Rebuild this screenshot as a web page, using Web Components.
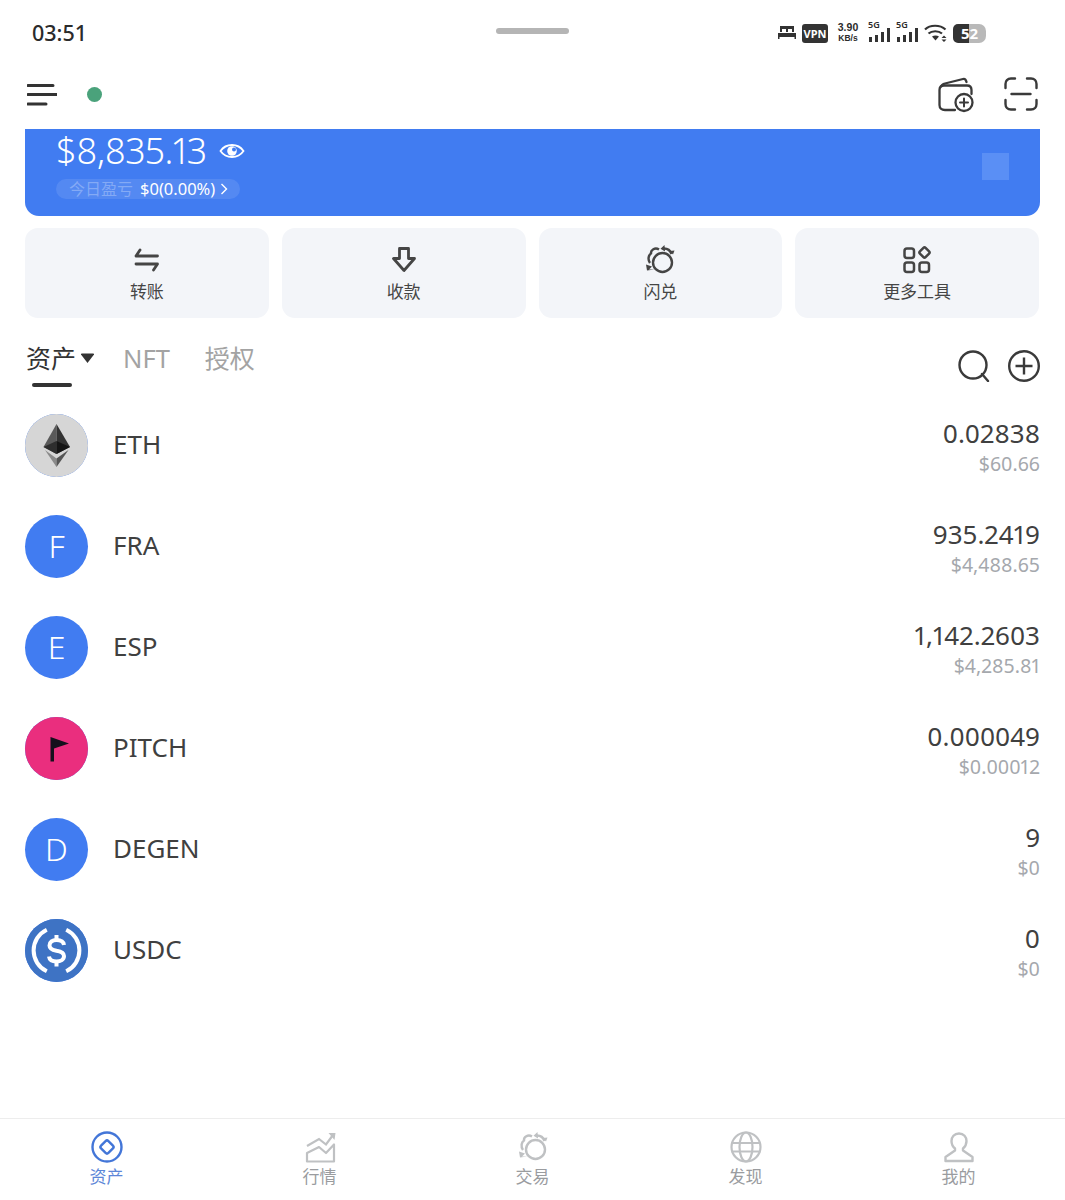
<!DOCTYPE html>
<html lang="zh">
<head>
<meta charset="utf-8">
<title>资产</title>
<style>
html, body { margin: 0; padding: 0; background: #fff; }
body { width: 1065px; height: 1200px; overflow: hidden; color: #333; font-family: "Noto Sans", "Noto Sans CJK SC", sans-serif; }
wallet-app { height: 1200px; }
</style>
</head>
<body>
<wallet-app>
  <status-bar></status-bar>
  <top-bar></top-bar>
  <balance-card></balance-card>
  <action-grid>
    <action-button icon="transfer">转账</action-button>
    <action-button icon="receive">收款</action-button>
    <action-button icon="swap">闪兑</action-button>
    <action-button icon="more">更多工具</action-button>
  </action-grid>
  <asset-tabs></asset-tabs>
  <asset-list>
    <asset-row symbol="ETH" amount="0.02838" value="$60.66" logo="eth"></asset-row>
    <asset-row symbol="FRA" amount="935.2419" value="$4,488.65" letter="F"></asset-row>
    <asset-row symbol="ESP" amount="1,142.2603" value="$4,285.81" letter="E"></asset-row>
    <asset-row symbol="PITCH" amount="0.000049" value="$0.00012" logo="pitch"></asset-row>
    <asset-row symbol="DEGEN" amount="9" value="$0" letter="D"></asset-row>
    <asset-row symbol="USDC" amount="0" value="$0" logo="usdc"></asset-row>
  </asset-list>
  <bottom-nav>
    <nav-item icon="assets" active>资产</nav-item>
    <nav-item icon="market">行情</nav-item>
    <nav-item icon="swap">交易</nav-item>
    <nav-item icon="globe">发现</nav-item>
    <nav-item icon="user">我的</nav-item>
  </bottom-nav>
</wallet-app>

<script>
const icons = {
  transfer: `<path d="M9 6 5 12H26.500M5 20H26.500L22.500 26" fill="none" stroke="currentColor" stroke-width="2.800" stroke-linejoin="round" stroke-linecap="round"/>`,
  receive: `<path d="M11.500 4.500H20.500V14.500H26.500L16 26.500 5.500 14.500H11.500Z" fill="none" stroke="currentColor" stroke-width="2.800" stroke-linejoin="round"/>`,
  swap: `<g fill="none" stroke="currentColor" stroke-width="2.400"><circle cx="18.500" cy="18.500" r="9.500"/><path d="M6 19C3.500 15.500 4.500 11 7 9.500 6.500 6 11 3 15 5.500M20 4.500C23.500 4.500 26.500 7 27.500 10"/></g><path d="M20.500 1 16.500 4.800 21 7.500ZM29 10.500 26 7 30.500 6.500ZM2 20.500 8 22.500 5 25.500H10.500L3 26.500Z" fill="currentColor"/>`,
  more: `<g fill="none" stroke="currentColor" stroke-width="2.500"><rect x="3.500" y="4.500" width="9.500" height="9.500" rx="2.500"/><rect x="3.500" y="18.500" width="9.500" height="9.500" rx="2.500"/><rect x="18.500" y="18.500" width="9.500" height="9.500" rx="2.500"/><rect x="19.500" y="4.500" width="8" height="8" rx="1.500" transform="rotate(45 23.500 8.500)"/></g>`,
  assets: `<g fill="none" stroke="currentColor"><circle cx="16" cy="16" r="14.500" stroke-width="2.400"/><rect x="10.800" y="10.800" width="10.400" height="10.400" rx="2" stroke-width="2.400" transform="rotate(45 16 16)"/></g>`,
  market: `<g fill="none" stroke="currentColor" stroke-width="2.200"><path d="M3 30.500V22L15 16 22 22 30 13.500V30.500Z" stroke-linejoin="round"/><path d="M3 15 15 8 22 13.500 29 4"/></g><path d="M24.500 2H31.500L30.500 9Z" fill="currentColor"/>`,
  globe: `<g fill="none" stroke="currentColor" stroke-width="2.200"><circle cx="16" cy="16" r="14.500"/><ellipse cx="16" cy="16" rx="6.500" ry="14.500"/><path d="M1.500 12H30.500M1.500 20.500H30.500"/></g>`,
  user: `<g fill="none" stroke="currentColor" stroke-width="2.400" stroke-linejoin="round"><path d="M16 2.500C20.800 2.500 23.500 6 23.500 10 23.500 13 22 15.800 20 17.500V19.500L29.500 26V30H2.500V26L12 19.500V17.500C10 15.800 8.500 13 8.500 10 8.500 6 11.200 2.500 16 2.500Z"/></g>`
};

function define(name, html, cls) {
  const tpl = document.createElement("template");
  tpl.innerHTML = html;
  customElements.define(name, class extends HTMLElement {
    constructor() {
      super();
      this.attachShadow({ mode: "open" }).appendChild(tpl.content.cloneNode(true));
    }
    connectedCallback() {
      if (cls) cls(this, this.shadowRoot);
    }
  });
}

define("wallet-app", `
  <style>:host { display: flex; flex-direction: column; }</style>
  <slot></slot>
`);

define("status-bar", `
  <style>
  :host { display: flex; align-items: center; height: 62px; padding: 0 79px 0 32px; justify-content: space-between; position: relative; color: #2b2b2b; }
  .time { font: 500 21.500px "Noto Sans", sans-serif; margin-top: 3px; }
  .pill { position: absolute; left: 496px; top: 28px; width: 73px; height: 6px; border-radius: 3px; background: #b5b5b5; }
  .right { display: flex; align-items: center; gap: 5px; margin-top: 4px; }
  .vpn { background: #333; color: #fff; font: 700 11px "Noto Sans", sans-serif; border-radius: 3px; width: 26px; height: 19px; display: flex; align-items: center; justify-content: center; }
  .speed { font: 700 8.500px/11px "Liberation Sans", sans-serif; text-align: center; width: 24px; margin: 0 3px; }
  .speed b { display: block; font: 700 10.500px/11px "Liberation Sans", sans-serif; }
  .sig { position: relative; width: 23px; height: 20px; }
  .sig span { position: absolute; left: 0; top: -4px; font: 600 9px/12px "Noto Sans", sans-serif; }
  .sig svg { position: absolute; left: 0; top: 0; }
  .bat { width: 33px; height: 19px; border-radius: 5px 7px 7px 5px; background: linear-gradient(90deg, #333 0 16px, #b9b9b9 16px); color: #fff; font: 700 15px/19px "Noto Sans", sans-serif; text-align: center; }
  </style>
  <div class="time">03:51</div>
  <div class="pill"></div>
  <div class="right">
    <svg width="20" height="18" viewBox="0 0 20 18"><path d="M3 2H17V8H3ZM1 9H19V15H17.500V13H2.500V15H1Z" fill="#333"/><path d="M5 5H9V8H5ZM11 5H15V8H11Z" fill="#fff"/></svg>
    <div class="vpn">VPN</div>
    <div class="speed"><b>3.90</b>KB/s</div>
    <div class="sig"><span>5G</span><svg width="23" height="20" viewBox="0 0 23 20"><path d="M1 14H4V19H1ZM7 12H10V19H7ZM13 9H16V19H13ZM19 5H22V19H19Z" fill="#333"/></svg></div>
    <div class="sig"><span>5G</span><svg width="23" height="20" viewBox="0 0 23 20"><path d="M1 14H4V19H1ZM7 12H10V19H7ZM13 9H16V19H13ZM19 5H22V19H19Z" fill="#333"/></svg></div>
    <svg width="24" height="20" viewBox="0 0 24 20"><g fill="none" stroke="#333" stroke-width="2.200"><path d="M1 6.500C6 1.500 16 1.500 21.500 6.500M4.500 10.500C8 7.500 14.500 7.500 18 10.500"/></g><path d="M8 13.500C10 12 13 12 15 13.500L11.500 17.500ZM20 12.500 22.500 15H17.500ZM20 19 17.500 16.500H22.500Z" fill="#333"/></svg>
    <div class="bat">52</div>
  </div>
`);

define("top-bar", `
  <style>
  :host { display: flex; align-items: center; height: 67px; padding: 0 27px 2px 27px; box-sizing: border-box; }
  .dot { width: 15px; height: 15px; border-radius: 50%; background: #4aa27b; margin-left: 30px; }
  .right { margin-left: auto; display: flex; gap: 30px; color: #3a3a3a; }
  svg { display: block; }
  </style>
  <svg width="30" height="24" viewBox="0 0 30 24"><path d="M1 2.500H26M1 11.500H30M1 21H19" stroke="#333" stroke-width="3" stroke-linecap="round" fill="none"/></svg>
  <div class="dot"></div>
  <div class="right">
    <svg width="36" height="36" viewBox="0 0 36 36" fill="none" stroke="currentColor" stroke-width="2.300" stroke-linecap="round"><path d="M17 33H7C3.500 33 1.500 31 1.500 28V13C1.500 10 3.500 8.500 6 8.500H29C31.500 8.500 33.500 10 33.500 13V17"/><path d="M3 9.500C3.500 8 5 7 7 6.500L25 2C27 1.500 28 3 28.500 5"/><circle cx="26" cy="25.500" r="8.500"/><path d="M26 21.500V29.500M22 25.500H30" stroke-width="2"/></svg>
    <svg width="34" height="34" viewBox="0 0 34 34" fill="none" stroke="currentColor" stroke-width="2.400" stroke-linecap="round"><path d="M1.500 11V7C1.500 4 3.500 1.500 7 1.500H11M23 1.500H27C30.500 1.500 32.500 4 32.500 7V11M1.500 23V27C1.500 30 3.500 32.500 7 32.500H11M23 32.500H27C30.500 32.500 32.500 30 32.500 27V23M7.500 17H26.500"/></svg>
  </div>
`);

define("balance-card", `
  <style>
  :host { display: flex; justify-content: space-between; margin: 0 25px; height: 87px; box-sizing: border-box; background: #417cf1; border-radius: 0 0 14px 14px; color: #fff; padding: 0 31px 0 31px; }
  .top { display: flex; align-items: center; gap: 13px; height: 44px; }
  .sum { font: 300 36px/44px "Noto Sans", sans-serif; font-variant-numeric: proportional-nums; letter-spacing: -.3px; }
  .pnl { display: inline-flex; align-items: center; gap: 7px; height: 20px; width: 184px; box-sizing: border-box; padding-left: 13px; background: rgba(255,255,255,.1); border-radius: 10px; margin-top: 6px; font: 400 16.500px/20px "Noto Sans", "Noto Sans CJK SC", sans-serif; white-space: nowrap; }
  .pnl i { font-style: normal; font-size: 16px; color: rgba(255,255,255,.28); }
  .pnl svg { margin-left: -2px; }
  .square { width: 27px; height: 27px; background: #5a8ff5; margin-top: 24px; }
  </style>
  <div>
    <div class="top">
      <div class="sum">$8,835.13</div>
      <svg width="26" height="18" viewBox="0 0 26 18"><path d="M1.500 9C7 1 19 1 24.500 9 19 17 7 17 1.500 9Z" fill="none" stroke="#fff" stroke-width="1.800"/><circle cx="13" cy="9" r="4.800" fill="#fff"/><circle cx="15" cy="7.500" r="2" fill="#417cf1"/></svg>
    </div>
    <div class="pnl"><i>今日盈亏</i><span>$0(0.00%)</span><svg width="8" height="12" viewBox="0 0 8 12"><path d="M1.500 1 6.500 6 1.500 11" fill="none" stroke="#fff" stroke-width="1.400"/></svg></div>
  </div>
  <div class="square"></div>
`);

define("action-grid", `
  <style>:host { display: grid; grid-template-columns: repeat(4, 1fr); gap: 13px; margin: 12px 26px 0 25px; }</style>
  <slot></slot>
`);

define("action-button", `
  <style>
  :host { display: flex; flex-direction: column; align-items: center; height: 90px; box-sizing: border-box; padding-top: 16px; background: #f3f5f9; border-radius: 13px; color: #454545; font: 400 17px/24px "Noto Sans CJK SC", sans-serif; }
  svg { display: block; margin-bottom: 3px; }
  </style>
  <svg width="32" height="32" viewBox="0 0 32 32"></svg>
  <slot></slot>
`, (el, root) => { root.querySelector("svg").innerHTML = icons[el.getAttribute("icon")]; });

define("asset-tabs", `
  <style>
  :host { display: flex; align-items: flex-start; height: 68px; margin: 22px 25px 0 26px; box-sizing: border-box; position: relative; font: 400 25px/36px "Noto Sans", "Noto Sans CJK SC", sans-serif; color: #a3a3a3; }
  .on { color: #333; display: flex; align-items: center; gap: 4px; margin-right: 28px; }
  .nft { margin-right: 35px; font-size: 25.500px; }
  .line { position: absolute; left: 6px; top: 43px; width: 40px; height: 4px; border-radius: 2px; background: #333; }
  .right { margin-left: auto; display: flex; gap: 18px; margin-top: 10px; color: #3a3a3a; }
  svg { display: block; }
  </style>
  <div class="on">资产<svg width="15" height="11" viewBox="0 0 15 11"><path d="M1 1.500C1 .8 1.500 .5 2 .5H13C13.500 .5 14 .8 14 1.500L7.500 10Z" fill="#333"/></svg></div>
  <div class="nft">NFT</div>
  <div>授权</div>
  <div class="line"></div>
  <div class="right">
    <svg width="32" height="32" viewBox="0 0 32 32" fill="none" stroke="currentColor" stroke-width="2.400"><circle cx="15" cy="15" r="13.500"/><path d="M24 24 30 31" stroke-linecap="round"/></svg>
    <svg width="32" height="32" viewBox="0 0 32 32" fill="none" stroke="currentColor" stroke-width="2.400"><circle cx="16" cy="16" r="14.800"/><path d="M16 7.500V24.500M7.500 16H24.500"/></svg>
  </div>
`);

define("asset-list", `
  <style>:host { display: flex; flex-direction: column; margin: -13px 25px 0; flex: 1; }</style>
  <slot></slot>
`);

const logos = {
  eth: `<svg width="63" height="63" viewBox="0 0 63 63"><circle cx="31.500" cy="31.500" r="31.500" fill="#d6d6d6"/><path d="M31.500 10 18.500 33 31.500 40Z" fill="#5a5a5a"/><path d="M31.500 10 45 33 31.500 40Z" fill="#333"/><path d="M18.500 33 31.500 27 31.500 40Z" fill="#2e2e2e"/><path d="M45 33 31.500 27 31.500 40Z" fill="#151515"/><path d="M20 36 31.500 44.500V53Z" fill="#8a8a8a"/><path d="M43.500 36 31.500 44.500V53Z" fill="#555"/></svg>`,
  pitch: `<svg width="63" height="63" viewBox="0 0 63 63"><circle cx="31.500" cy="31.500" r="31.500" fill="#ea2e7e"/><path d="M25.500 20 44 26.500 29 31.500V44.500H25.500Z" fill="#14101c"/></svg>`,
  usdc: `<svg width="63" height="63" viewBox="0 0 63 63"><circle cx="31.500" cy="31.500" r="31.500" fill="#3e73c4"/><g fill="none" stroke="#fff" stroke-width="4"><path d="M21.800 10.700A23 23 0 0 0 21.800 52.300"/><path d="M41.200 10.700A23 23 0 0 1 41.200 52.300"/><path d="M39 26C38.500 22.500 35.500 21 31.500 21 27.500 21 24.500 23 24.500 26.500 24.500 30 27.500 31 31.500 31.800 35.500 32.500 39 33.500 39 37 39 40.500 35.500 42.500 31.500 42.500 27.500 42.500 24.500 41 24 37.500"/><path d="M31.500 16V21M31.500 42.500V47.500"/></g></svg>`
};

define("asset-row", `
  <style>
  :host { display: flex; align-items: center; height: 101px; color: #404040; }
  .logo { width: 63px; height: 63px; box-sizing: border-box; border-radius: 50%; background: #417cf1; color: #fff; display: flex; align-items: center; justify-content: center; font: 300 32px "Noto Sans", sans-serif; flex: none; }
  .logo.letter { padding-bottom: 2px; }
  .logo svg { display: block; }
  .sym { margin-left: 25px; font: 400 26px "Noto Sans", sans-serif; margin-top: -4px; }
  .nums { margin-left: auto; text-align: right; margin-top: -1px; }
  .amt { font: 400 26px/36px "Noto Sans", sans-serif; font-variant-numeric: proportional-nums; }
  .val { font: 400 19.500px/22px "Noto Sans", sans-serif; font-variant-numeric: proportional-nums; color: #a5a8ad; margin-top: 2px; }
  </style>
  <div class="logo"></div>
  <div class="sym"></div>
  <div class="nums"><div class="amt"></div><div class="val"></div></div>
`, (el, root) => {
  const logo = root.querySelector(".logo");
  if (el.hasAttribute("logo")) logo.innerHTML = logos[el.getAttribute("logo")];
  else {
    logo.textContent = el.getAttribute("letter");
    logo.classList.add("letter");
  }
  root.querySelector(".sym").textContent = el.getAttribute("symbol");
  root.querySelector(".amt").textContent = el.getAttribute("amount");
  root.querySelector(".val").textContent = el.getAttribute("value");
});

define("bottom-nav", `
  <style>:host { display: grid; grid-template-columns: repeat(5, 1fr); height: 82px; box-sizing: border-box; border-top: 1px solid #ededed; }</style>
  <slot></slot>
`);

define("nav-item", `
  <style>
  :host { display: flex; flex-direction: column; align-items: center; padding-top: 12px; color: #bfc1c3; font: 400 17px/24px "Noto Sans CJK SC", sans-serif; }
  :host([active]) { color: #4376d8; }
  span { color: #9a9c9f; }
  :host([active]) span { color: #5c86d8; }
  svg { display: block; margin-bottom: 1px; }
  </style>
  <svg width="32" height="32" viewBox="0 0 32 32"></svg>
  <span><slot></slot></span>
`, (el, root) => { root.querySelector("svg").innerHTML = icons[el.getAttribute("icon")]; });
</script>
</body>
</html>
